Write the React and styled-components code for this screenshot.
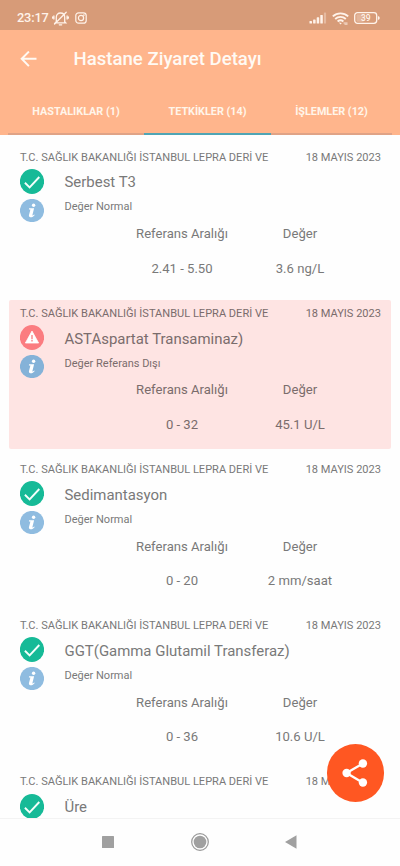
import React from "react";
import styled, { createGlobalStyle } from "styled-components";

const GlobalStyle = createGlobalStyle`
  * {
    box-sizing: border-box;
  }

  body {
    margin: 0;
    background-color: #fefefe;
    font-family: Roboto, "Noto Sans", sans-serif;
  }
`;

const Screen = styled.div`
  position: relative;
  width: 400px;
  height: 866px;
  display: flex;
  flex-direction: column;
  overflow: hidden;
  background-color: #fefefe;
  white-space: nowrap;
`;

const StatusBar = styled.div`
  height: 30px;
  flex-shrink: 0;
  display: flex;
  align-items: center;
  justify-content: space-between;
  padding: 6px 20px 0 17px;
  background-color: #d79b78;
  color: #fff3ea;
`;

const StatusGroup = styled.div`
  display: flex;
  align-items: center;
  gap: ${(props) => props.$gap}px;
`;

const Clock = styled.span`
  font-size: 12.8px;
  font-weight: 500;
  line-height: 16px;
  letter-spacing: -0.15px;
`;

const AppBar = styled.div`
  height: 58px;
  flex-shrink: 0;
  display: flex;
  align-items: center;
  gap: 36.5px;
  padding-left: 20px;
  background-color: #ffb58c;
`;

const Title = styled.h1`
  margin: 0;
  font-size: 18.6px;
  font-weight: 500;
  line-height: 24px;
  color: #fffaf4;
`;

const Tabs = styled.div`
  height: 47px;
  flex-shrink: 0;
  display: flex;
  padding: 0 8px;
  background-color: #ffb58c;
`;

const Tab = styled.div`
  width: ${(props) => props.$width}px;
  display: flex;
  align-items: center;
  justify-content: center;
  padding-top: 2px;
  border-bottom: 2px solid ${(props) => (props.$active ? "#4fa5b5" : "#e0a386")};
  font-size: 10.8px;
  font-weight: 700;
  color: #fff5ea;
`;

const List = styled.div`
  flex: 1;
  min-height: 0;
  overflow: hidden;
  display: flex;
  flex-direction: column;
  gap: 7.2px;
  padding: 8.9px 9px 0;
`;

const Card = styled.div`
  height: 149px;
  flex-shrink: 0;
  padding: 6.7px 10px 0 11px;
  border-radius: 2px;
  background-color: ${(props) => (props.$alert ? "#fee4e3" : "transparent")};
  color: ${(props) => (props.$alert ? "#7a6c6c" : "#797979")};
`;

const CardHeader = styled.div`
  display: flex;
  justify-content: space-between;
  font-size: 11.05px;
  line-height: 14px;
`;

const CardBody = styled.div`
  display: flex;
  gap: 20.5px;
  padding-top: 4.3px;
`;

const Icons = styled.div`
  width: 24px;
  display: flex;
  flex-direction: column;
  gap: 5px;

  svg {
    display: block;
  }
`;

const Names = styled.div`
  display: flex;
  flex-direction: column;
  gap: 8px;
`;

const Name = styled.div`
  padding-top: 3.6px;
  font-size: 14.95px;
  line-height: 20px;
`;

const Status = styled.div`
  font-size: 11px;
  line-height: 14px;
`;

const Values = styled.div`
  display: grid;
  grid-template-columns: 118px 118px;
  row-gap: 16.3px;
  justify-items: center;
  padding: 3.4px 0 0 103px;
  font-size: 13.1px;
  line-height: 18px;
`;

const Fab = styled.div`
  position: absolute;
  right: 16px;
  bottom: 64.5px;
  width: 57.5px;
  height: 57.5px;
  display: flex;
  align-items: center;
  justify-content: center;
  border-radius: 50%;
  background-color: #ff5722;
`;

const NavBar = styled.div`
  height: 48px;
  flex-shrink: 0;
  display: flex;
  align-items: center;
  justify-content: space-between;
  padding: 0 103px 1px 102px;
  border-top: 1px solid #f3f3f3;
`;

const MutedBell = () => (
  <svg width="17" height="15" viewBox="0 0 17 15" fill="none" stroke="currentColor" strokeWidth="1.3" strokeLinecap="round">
    <path d="M4.3 10.8V6.2C4.3 3.6 6 2 8.5 2s4.2 1.6 4.2 4.2v4.6l1 1H3.3zM7.3 13.8h2.4M14.2 1.2L2.6 13M1.9 5v3M15.1 5v3M.6 6v1.2M16.4 6v1.2" />
  </svg>
);

const Instagram = () => (
  <svg width="12" height="12" viewBox="0 0 12 12" fill="none" stroke="currentColor" strokeWidth="1.2">
    <rect x="0.8" y="0.8" width="10.4" height="10.4" rx="2.8" />
    <circle cx="6" cy="6" r="2.6" />
    <circle cx="8.9" cy="3.1" r="0.3" />
  </svg>
);

const Signal = () => (
  <svg width="18" height="12" viewBox="0 0 18 12" fill="currentColor">
    <rect x="0.5" y="9" width="2.5" height="2.5" rx="0.6" />
    <rect x="4.1" y="7.4" width="2.5" height="4.1" rx="0.6" />
    <rect x="7.7" y="5.3" width="2.5" height="6.2" rx="0.6" />
    <rect x="11.3" y="3" width="2.5" height="8.5" rx="0.6" />
    <rect x="14.9" y="0.5" width="2.2" height="11" rx="0.6" opacity="0.35" />
  </svg>
);

const Wifi = () => (
  <svg width="17" height="13" viewBox="0 0 17 13" fill="none" stroke="currentColor" strokeWidth="1.9">
    <path d="M.8 4.4c4.5-4 10.9-4 15.4 0M3.2 7c3.1-2.8 7.5-2.8 10.6 0M5.6 9.4c1.8-1.5 4-1.5 5.8 0" />
    <path d="M6.8 10.5L8.5 12.4l1.3-1.4z" fill="currentColor" stroke="none" />
    <path d="M11.5 11h4M12.5 12.2h3" strokeWidth="0.8" />
  </svg>
);

const Battery = () => (
  <svg width="26" height="12" viewBox="0 0 26 12">
    <rect x="0.7" y="0.7" width="22" height="10.6" rx="2.8" fill="none" stroke="currentColor" strokeWidth="1.3" />
    <rect x="2.4" y="2.3" width="7.5" height="7.4" rx="1" fill="currentColor" opacity="0.3" />
    <path d="M24 4l1.6 1v2L24 8z" fill="currentColor" />
    <text x="11.8" y="9" fontSize="8.5" fontWeight="500" textAnchor="middle" fill="currentColor">39</text>
  </svg>
);

const BackArrow = () => (
  <svg width="17" height="17" viewBox="0 0 17 17" fill="none" stroke="#fffaf4" strokeWidth="2">
    <path d="M8.9 .6L1.7 7.8l7.2 7.3M1.7 7.8H16.5" />
  </svg>
);

const CheckIcon = () => (
  <svg width="24" height="25" viewBox="0 0 24 25">
    <ellipse cx="12" cy="12.5" rx="12.1" ry="12.4" fill="#16ba97" />
    <path d="M4.9 13.8l4.7 4.6L19.3 8" fill="none" stroke="#f4fffb" strokeWidth="1.9" />
  </svg>
);

const WarningIcon = () => (
  <svg width="24" height="25" viewBox="0 0 24 25">
    <ellipse cx="12" cy="12.5" rx="12.1" ry="12.4" fill="#fb7c80" />
    <path d="M12 6.1L18.6 18H5.4z" fill="#fff" stroke="#fff" strokeWidth="0.8" strokeLinejoin="round" />
    <path d="M12 10v4.2M12 15.1v1.5" stroke="#fb7c80" strokeWidth="1.3" />
  </svg>
);

const InfoIcon = ({ alert }) => (
  <svg width="24" height="23" viewBox="0 0 24 23">
    <ellipse cx="12" cy="11.5" rx="12.1" ry="11.6" fill={alert ? "#84b2d8" : "#8fbce0"} />
    <circle cx="13.6" cy="6.2" r="1.7" fill="#fff" />
    <path d="M9.1 9.2h5l-1.8 7.2q.9 0 1.9-1l.5.5c-1.5 2-3 2.6-4.5 2.3-1.2-.2-1.5-1-1.2-2.1l1.4-5.6H8.9z" fill="#fff" />
  </svg>
);

const ShareIcon = () => (
  <svg width="26" height="28" viewBox="0 0 26 28" fill="#fff">
    <path d="M20.5 4.8L4.5 14l16 9.4" fill="none" stroke="#fff" strokeWidth="2.3" />
    <circle cx="20.9" cy="4.5" r="4.2" />
    <circle cx="4.6" cy="14" r="4.2" />
    <circle cx="20.9" cy="23.5" r="4.2" />
  </svg>
);

const results = [
  { name: "Serbest T3", range: "2.41 - 5.50", value: "3.6 ng/L" },
  { name: "ASTAspartat Transaminaz)", range: "0 - 32", value: "45.1 U/L", alert: true },
  { name: "Sedimantasyon", range: "0 - 20", value: "2 mm/saat" },
  { name: "GGT(Gamma Glutamil Transferaz)", range: "0 - 36", value: "10.6 U/L" },
  { name: "Üre" },
];

const Result = ({ name, range, value, alert }) => (
  <Card $alert={alert}>
    <CardHeader>
      <span>T.C. SAĞLIK BAKANLIĞI İSTANBUL LEPRA DERİ VE</span>
      <span>18 MAYIS 2023</span>
    </CardHeader>
    <CardBody>
      <Icons>
        {alert ? <WarningIcon /> : <CheckIcon />}
        {range && <InfoIcon alert={alert} />}
      </Icons>
      <Names>
        <Name>{name}</Name>
        {range && <Status>{alert ? "Değer Referans Dışı" : "Değer Normal"}</Status>}
      </Names>
    </CardBody>
    {range && (
      <Values>
        <span>Referans Aralığı</span>
        <span>Değer</span>
        <span>{range}</span>
        <span>{value}</span>
      </Values>
    )}
  </Card>
);

const App = () => {
  return (
    <Screen>
      <GlobalStyle />
      <StatusBar>
        <StatusGroup $gap={6}>
          <StatusGroup $gap={3}>
            <Clock>23:17</Clock>
            <MutedBell />
          </StatusGroup>
          <Instagram />
        </StatusGroup>
        <StatusGroup $gap={5}>
          <Signal />
          <Wifi />
          <Battery />
        </StatusGroup>
      </StatusBar>
      <AppBar>
        <BackArrow />
        <Title>Hastane Ziyaret Detayı</Title>
      </AppBar>
      <Tabs>
        <Tab $width={136}>HASTALIKLAR (1)</Tab>
        <Tab $width={127} $active>TETKİKLER (14)</Tab>
        <Tab $width={121}>İŞLEMLER (12)</Tab>
      </Tabs>
      <List>
        {results.map((result) => (
          <Result key={result.name} {...result} />
        ))}
      </List>
      <NavBar>
        <svg width="12" height="12" viewBox="0 0 12 12">
          <rect width="12" height="12" rx="0.5" fill="#a0a0a0" />
        </svg>
        <svg width="18" height="18" viewBox="0 0 18 18">
          <circle cx="9" cy="9" r="8.3" fill="none" stroke="#999" strokeWidth="1.2" />
          <circle cx="9" cy="9" r="6.3" fill="#a0a0a0" />
        </svg>
        <svg width="12" height="14" viewBox="0 0 12 14">
          <path d="M0 7L11.5.3v13.4z" fill="#a0a0a0" />
        </svg>
      </NavBar>
      <Fab>
        <ShareIcon />
      </Fab>
    </Screen>
  );
};

export default App;
